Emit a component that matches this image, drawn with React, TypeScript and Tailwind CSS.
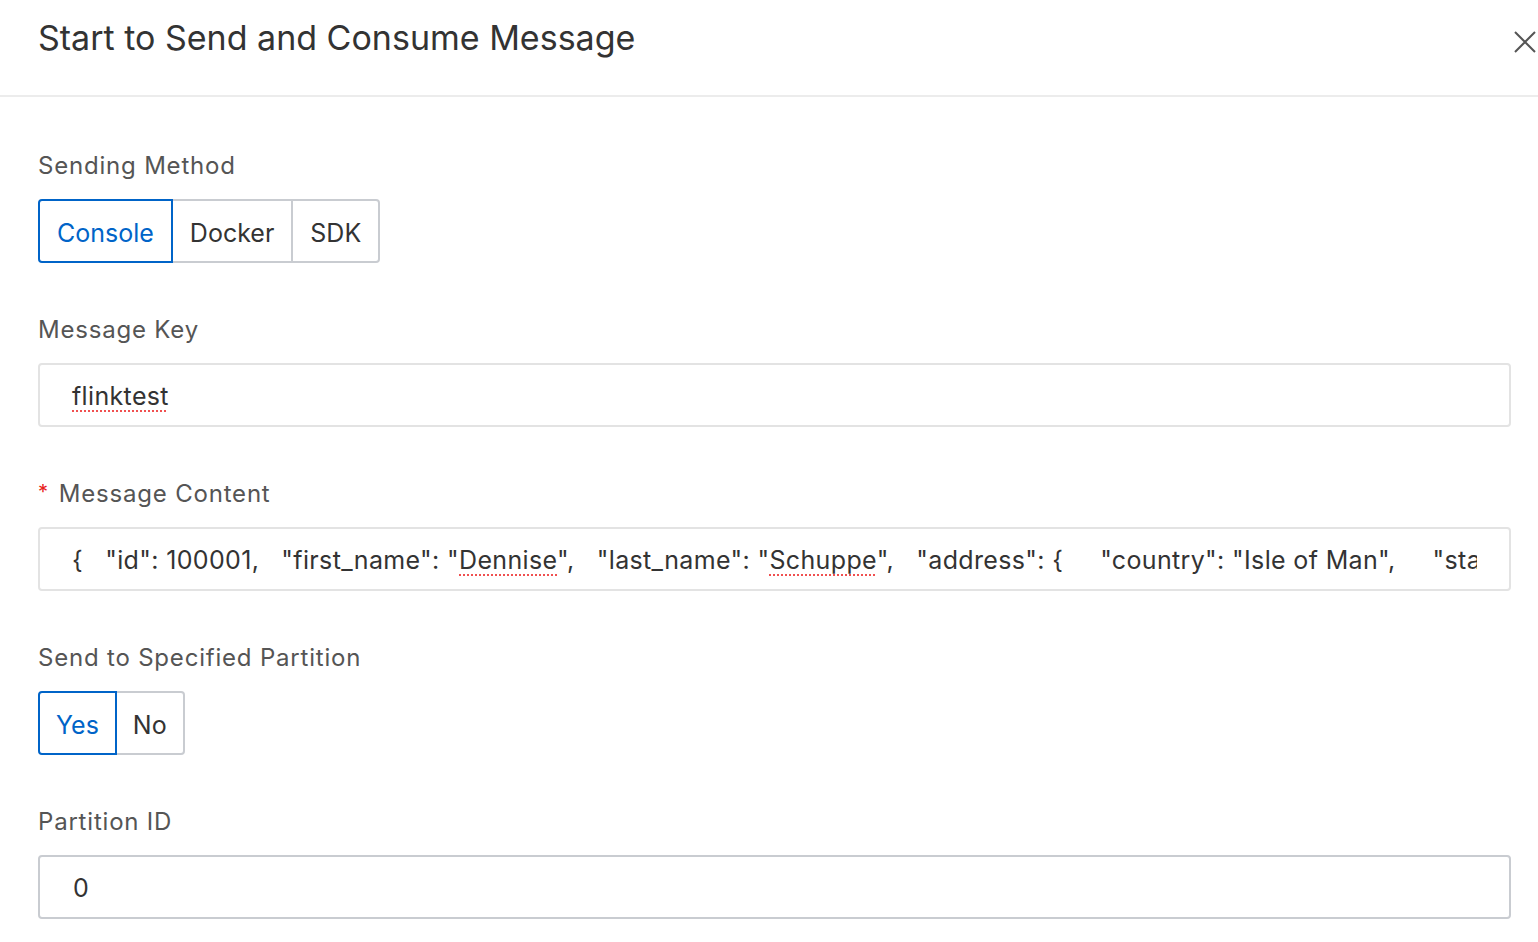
import { useState } from 'react';

const font = { fontFamily: 'Inter, "Helvetica Neue", Arial, sans-serif' };

const rest = '",   "address": {     "country": "Isle of Man",     "state": "Nevada",     "city": "Douglas"   } }';

const Typo = ({ children }: { children: string }) => (
    <span className="underline decoration-dotted decoration-[#f05050] decoration-2 underline-offset-[6px]">{children}</span>
);

const Segmented = ({
    options,
    value,
    onChange,
    compact,
}: {
    options: string[];
    value: string;
    onChange: (v: string) => void;
    compact?: boolean;
}) => (
    <div className="flex h-[64px]">
        {options.map((opt, i) => {
            const active = opt === value;
            return (
                <button
                    key={opt}
                    onClick={() => onChange(opt)}
                    className={`relative h-full ${compact ? 'px-[16px]' : 'px-[17px]'} pt-[6px] text-[25px] border-2 -ml-[2px] first:ml-0 ${
                        i === 0 ? 'rounded-l-[4px]' : ''
                    } ${i === options.length - 1 ? 'rounded-r-[4px]' : ''} ${
                        active ? 'z-10 border-[#0064c8] text-[#0064c8] bg-white' : 'border-[#c9ccd1] text-[#333] bg-white'
                    }`}
                >
                    {opt}
                </button>
            );
        })}
    </div>
);

const Label = ({ children, required }: { children: string; required?: boolean }) => (
    <div className="h-8 flex items-center text-[24px] tracking-[0.8px] text-[#555] mb-[17px]">
        {required && <span className="text-[#e8201b] text-[20px] mr-[10px] -mt-1">*</span>}
        {children}
    </div>
);

const App = () => {
    const [method, setMethod] = useState('Console');
    const [partition, setPartition] = useState('Yes');

    return (
        <div className="w-[1538px] h-[942px] bg-white overflow-hidden" style={font}>
            {/* Header */}
            <div className="h-[97px] border-b-2 border-[#ececec] flex items-start justify-between pl-[38px] pr-[2px]">
                <h2 className="text-[34px] text-[#333] leading-none mt-[21px]">Start to Send and Consume Message</h2>
                <button className="mt-[31px] text-[#555]">
                    <svg className="w-[22px] h-[22px]" viewBox="0 0 22 22" fill="none" stroke="currentColor" strokeWidth={2}>
                        <path d="M1 1l20 20M21 1L1 21" />
                    </svg>
                </button>
            </div>

            {/* Form */}
            <div className="pl-[38px] pr-[27px] pt-[53px] flex flex-col gap-[51px]">
                <div>
                    <Label>Sending Method</Label>
                    <Segmented options={['Console', 'Docker', 'SDK']} value={method} onChange={setMethod} />
                </div>

                <div>
                    <Label>Message Key</Label>
                    <div className="h-[64px] border-2 border-[#e3e3e3] rounded-[4px] px-[32px] pt-[3px] flex items-center text-[25px] tracking-[0.35px] text-[#333]">
                        <Typo>flinktest</Typo>
                    </div>
                </div>

                <div>
                    <Label required>Message Content</Label>
                    <div className="h-[64px] border-2 border-[#e3e3e3] rounded-[4px] px-[32px] pt-[3px] flex items-center text-[25px] tracking-[0.35px] text-[#333]">
                        <div className="overflow-hidden whitespace-pre">
                            {'{   "id": 100001,   "first_name": "'}
                            <Typo>Dennise</Typo>
                            {'",   "last_name": "'}
                            <Typo>Schuppe</Typo>
                            {rest}
                        </div>
                    </div>
                </div>

                <div>
                    <Label>Send to Specified Partition</Label>
                    <Segmented options={['Yes', 'No']} value={partition} onChange={setPartition} compact />
                </div>

                <div>
                    <Label>Partition ID</Label>
                    <div className="h-[64px] border-2 border-[#c9ccd1] rounded-[4px] px-[33px] pt-[3px] flex items-center text-[25px] text-[#333]">
                        0
                    </div>
                </div>
            </div>
        </div>
    );
};

export default App;
